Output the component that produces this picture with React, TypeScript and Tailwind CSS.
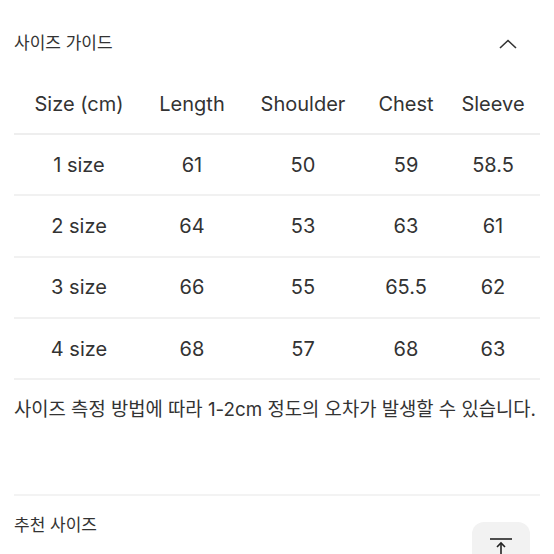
const rows = [
  ['1 size', '61', '50', '59', '58.5'],
  ['2 size', '64', '53', '63', '61'],
  ['3 size', '66', '55', '65.5', '62'],
  ['4 size', '68', '57', '68', '63'],
];

const headers = ['Size (cm)', 'Length', 'Shoulder', 'Chest', 'Sleeve'];

const grid = 'grid grid-cols-[130px_96px_126px_80px_94px] items-center text-center';

export default function App() {
  return (
    <div
      className="w-[554px] h-[554px] overflow-hidden bg-white text-[#333] px-[14px] relative"
      style={{ fontFamily: 'Inter, "Noto Sans CJK KR", sans-serif' }}
    >
      {/* Size guide header */}
      <div className="flex items-center justify-between h-[46px] mt-[21px]">
        <span className="text-[17px]">사이즈 가이드</span>
        <svg width="18" height="10" viewBox="0 0 18 10" className="mr-[23px]" fill="none">
          <path d="M1 9 L9 1.5 L17 9" stroke="#333" strokeWidth="1.6" />
        </svg>
      </div>

      {/* Size table */}
      <div className="mt-[7px] text-[20px]">
        <div className={`${grid} h-[61px] border-b-2 border-[#eeeeee]`}>
          {headers.map((h) => (
            <div key={h}>{h}</div>
          ))}
        </div>
        {rows.map((r) => (
          <div key={r[0]} className={`${grid} h-[61.3px] border-b-2 border-[#f1f1f1]`}>
            {r.map((c, i) => (
              <div key={i}>{c}</div>
            ))}
          </div>
        ))}
      </div>

      <p className="mt-[16px] text-[18.8px] whitespace-nowrap">
        사이즈 측정 방법에 따라 1-2cm 정도의 오차가 발생할 수 있습니다.
      </p>

      <div className="mt-[70px] border-t-2 border-[#f3f3f3]" />

      <div className="mt-[17px]">
        <span className="text-[17px]">추천 사이즈</span>
      </div>

      {/* Scroll to top */}
      <button className="absolute left-[472px] top-[522px] w-[58px] h-[58px] rounded-[12px] bg-[#f2f2f2] flex justify-center pt-[16px]">
        <svg width="24" height="24" viewBox="0 0 24 24" fill="none" stroke="#222" strokeWidth="1.6">
          <path d="M1 1 H23" />
          <path d="M12 5 V24" />
          <path d="M8 9 L12 5 L16 9" />
        </svg>
      </button>
    </div>
  );
}
